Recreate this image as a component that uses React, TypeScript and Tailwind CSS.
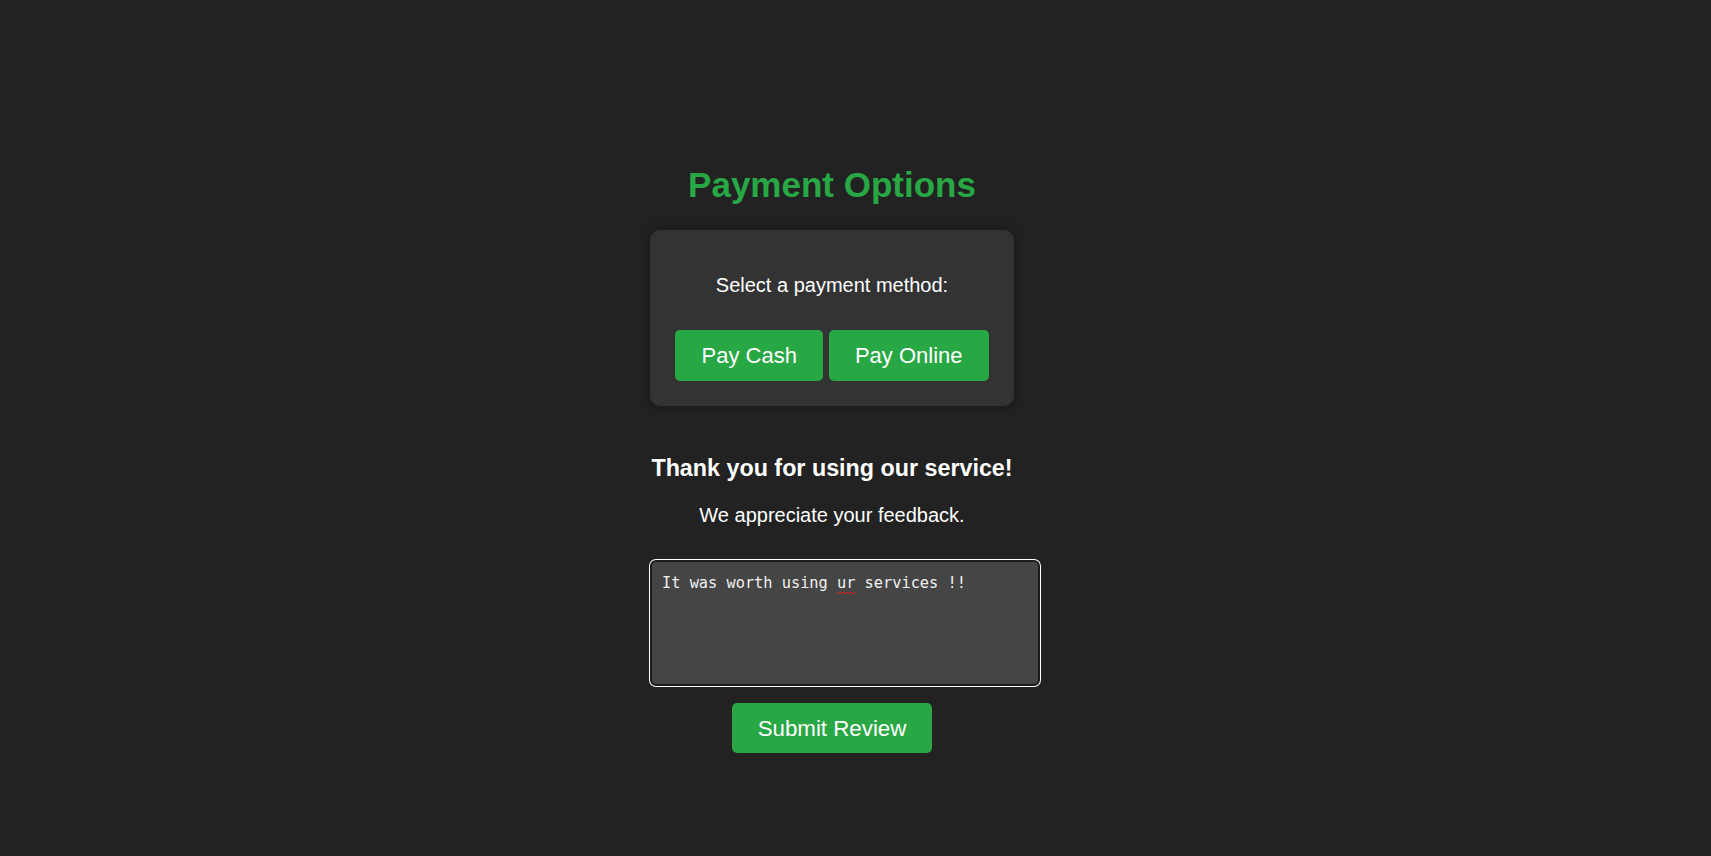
import React from "react";

export default function App() {
  const sans = { fontFamily: '"Liberation Sans", Arial, sans-serif' };
  return (
    <div
      className="min-h-screen w-full bg-[#222222] flex flex-col items-center pt-[165px] pr-[47px]"
      style={sans}
    >
      <h1 className="text-[35px] leading-[40px] font-bold text-[#28a745]">Payment Options</h1>

      <div className="mt-[25px] bg-[#333333] rounded-[10px] px-[25px] pt-[44px] pb-[25px] flex flex-col items-center shadow-[0_0_12px_rgba(0,0,0,0.35)]">
        <p className="text-[20px] leading-[23px] text-white">Select a payment method:</p>
        <div className="mt-[33px] flex gap-[6px]">
          <button className="bg-[#28a745] text-white text-[22px] leading-[25px] px-[26px] py-[13px] rounded-[5px]">
            Pay Cash
          </button>
          <button className="bg-[#28a745] text-white text-[22px] leading-[25px] px-[26px] py-[13px] rounded-[5px]">
            Pay Online
          </button>
        </div>
      </div>

      <h3 className="mt-[49px] text-[23.3px] leading-[26px] font-bold text-white">Thank you for using our service!</h3>
      <p className="mt-[23px] text-[20px] leading-[23px] text-white">We appreciate your feedback.</p>

      <div className="mt-[32px] pl-[26px]">
        <div className="relative">
          <textarea
            readOnly
            spellCheck={false}
            defaultValue="It was worth using ur services !!"
            className="block w-[390px] h-[126px] m-px resize-none bg-[#454545] text-[#f2f2f2] text-[15.3px] leading-[18px] px-[10px] pt-[12px] border-2 border-[#1c1c1c] rounded-[6px] shadow-[0_0_0_1px_#ffffff] outline-none"
            style={{ fontFamily: '"DejaVu Sans Mono", "Liberation Mono", monospace' }}
          />
          <svg
            className="absolute left-[188px] top-[31px] pointer-events-none"
            width="19"
            height="4"
            viewBox="0 0 19 4"
          >
            <path d="M0 3 L2 1 L4 3 L6 1 L8 3 L10 1 L12 3 L14 1 L16 3 L18 1" fill="none" stroke="#e02020" strokeWidth="1" />
          </svg>
        </div>
      </div>

      <button className="mt-[16px] h-[50px] bg-[#28a745] text-white text-[22.3px] leading-[25px] px-[26px] rounded-[5px]">
        Submit Review
      </button>
    </div>
  );
}
